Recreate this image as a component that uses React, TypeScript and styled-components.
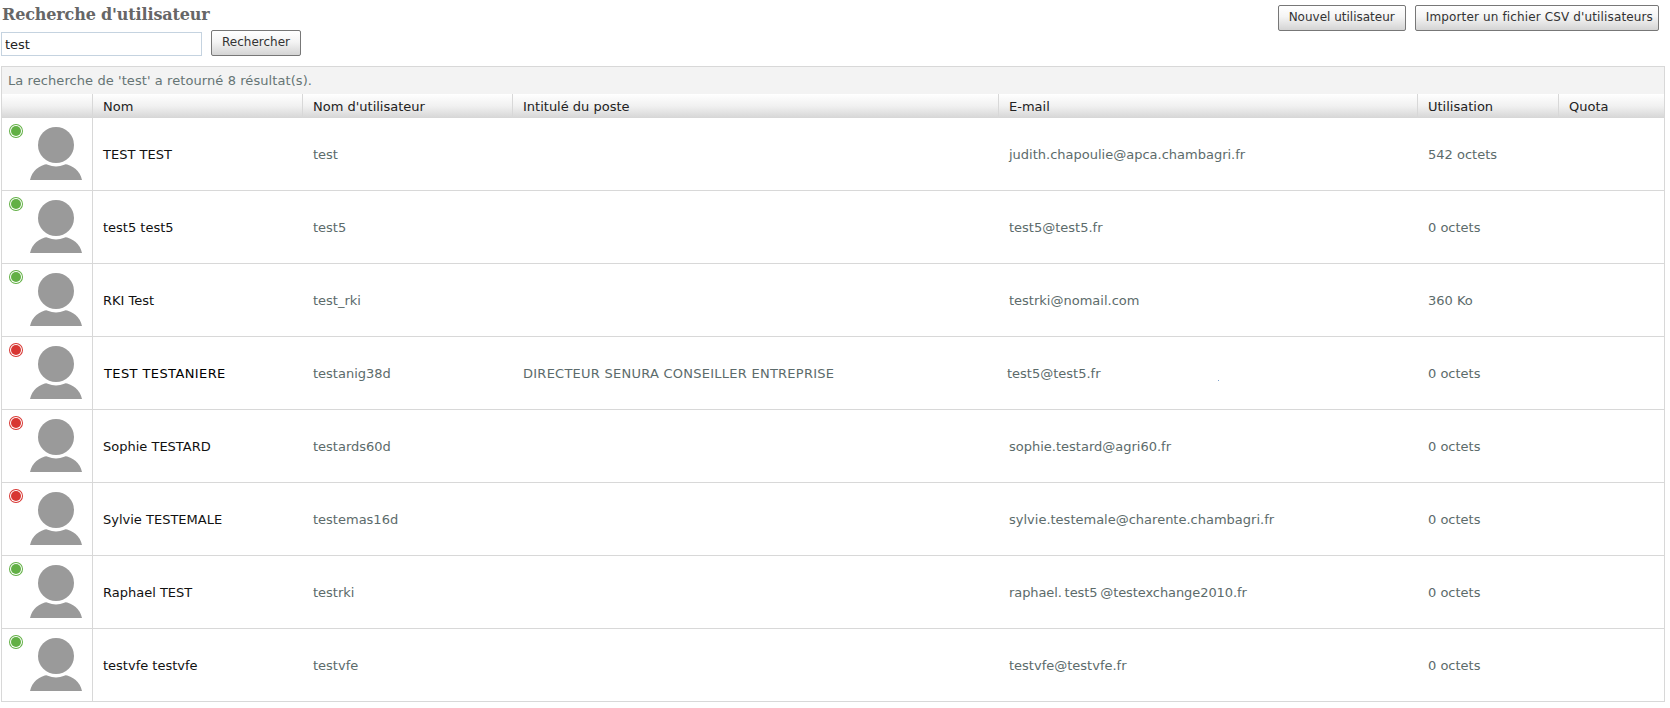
import styled, { createGlobalStyle } from "styled-components";

const GlobalStyle = createGlobalStyle`
    html, body {
        margin: 0;
        padding: 0;
        background: #fff;
    }
    body {
        font-family: "DejaVu Sans", Verdana, sans-serif;
        font-size: 13px;
        color: #5c6b6b;
    }
`;

const Page = styled.div`
    width: 1670px;
    height: 708px;
    overflow: hidden;
    padding: 5px 5px 0 1px;
    box-sizing: border-box;
`;

const TopBar = styled.div`
    display: flex;
    justify-content: space-between;
    align-items: flex-start;
    height: 61px;
`;

const SearchBox = styled.div`
    display: flex;
    flex-direction: column;
`;

const Title = styled.h1`
    margin: 0 0 5px 1px;
    font-family: "DejaVu Serif", Georgia, serif;
    font-size: 16px;
    line-height: 20px;
    letter-spacing: -0.15px;
    font-weight: bold;
    color: #666;
`;

const SearchRow = styled.form`
    display: flex;
    align-items: flex-end;
    gap: 9px;
`;

const SearchInput = styled.input`
    width: 201px;
    height: 24px;
    box-sizing: border-box;
    padding: 0 3px;
    border: 1px solid #c5d3e0;
    font-family: inherit;
    font-size: 13px;
    color: #222;
    outline: none;
`;

const Button = styled.button<{ $spaced?: boolean }>`
    height: 26px;
    padding: 0 ${(p) => (p.$spaced ? "5px" : "10px")} 2px 10px;
    box-sizing: border-box;
    border: 1px solid #777;
    border-radius: 2px;
    background: linear-gradient(#ffffff, #f4f4f4 45%, #d4d4d4);
    font-family: inherit;
    font-size: 12px;
    letter-spacing: ${(p) => (p.$spaced ? "0.14px" : "0")};
    color: #333;
`;

const Actions = styled.div`
    display: flex;
    gap: 9px;
    padding-right: 6px;
`;

const Summary = styled.div`
    height: 27px;
    line-height: 27px;
    padding-left: 6px;
    background: #f3f3f3;
    border: 1px solid #d8d8d8;
    border-width: 1px 1px 0 1px;
    color: #667575;
    font-size: 13px;
    letter-spacing: 0.08px;
`;

const Table = styled.table`
    width: 1664px;
    table-layout: fixed;
    border-collapse: separate;
    border-spacing: 0;
    border-left: 1px solid #d8d8d8;
    border-right: 1px solid #d8d8d8;
    box-sizing: border-box;
`;

const HeadCell = styled.th`
    height: 24px;
    padding: 1px 0 0 10px;
    box-sizing: border-box;
    text-align: left;
    font-weight: normal;
    font-size: 13px;
    color: #222;
    background: linear-gradient(#ffffff, #f1f1f1 50%, #d6d6d6);
    border-right: 1px solid #d8d8d8;
    &:last-child {
        border-right: none;
    }
`;

const Cell = styled.td<{ $dark?: boolean; $tight?: boolean; $spaced?: boolean }>`
    height: 73px;
    padding: 0 0 0 ${(p) => (p.$tight ? "8px" : "10px")};
    box-sizing: border-box;
    font-size: 13px;
    letter-spacing: ${(p) => (p.$spaced ? "0.25px" : "0")};
    color: ${(p) => (p.$dark ? "#111" : "#5c6b6b")};
    border-bottom: 1px solid #d8d8d8;
    position: relative;
    white-space: nowrap;
`;

const AvatarCell = styled.td`
    height: 73px;
    padding: 0;
    box-sizing: border-box;
    border-bottom: 1px solid #d8d8d8;
    border-right: 1px solid #d8d8d8;
    position: relative;
`;

const AvatarIcon = styled.svg`
    display: block;
    width: 52px;
    height: 62px;
    margin: 0 0 10px 28px;
`;

const StatusDot = styled.span<{ $on: boolean }>`
    position: absolute;
    left: 9px;
    top: 8px;
    width: 10px;
    height: 10px;
    border-radius: 50%;
    background: ${(p) => (p.$on ? "#62b045" : "#d83733")};
    box-shadow: 0 0 0 1px #fff, 0 0 0 2px ${(p) => (p.$on ? "#62b045" : "#d83733")};
`;

const Speck = styled.span`
    position: absolute;
    left: 219px;
    top: 43px;
    width: 1px;
    height: 1px;
    background: #7fa3cc;
`;

const Wide = styled.span`
    padding-left: 1px;
    letter-spacing: 0.4px;
    color: #000;
`;

const CloseWords = styled.span`
    word-spacing: -1.3px;
    letter-spacing: -0.08px;
`;

const Avatar = () => (
    <AvatarIcon viewBox="0 0 52 62">
        <path d="M0 62 C2 53 9 47 18 46 L34 46 C43 47 50 53 52 62 Z" fill="#9a9a9a" />
        <circle cx="26" cy="27" r="21.5" fill="#fff" />
        <circle cx="26" cy="27" r="18" fill="#9a9a9a" />
    </AvatarIcon>
);

const COLUMNS = [91, 210, 210, 486, 419, 141, 105];
const HEADERS = ["", "Nom", "Nom d'utilisateur", "Intitulé du poste", "E-mail", "Utilisation", "Quota"];

const USERS = [
    { on: true, name: "TEST TEST", login: "test", job: "", mail: "judith.chapoulie@apca.chambagri.fr", used: "542 octets" },
    { on: true, name: "test5 test5", login: "test5", job: "", mail: "test5@test5.fr", used: "0 octets" },
    { on: true, name: "RKI Test", login: "test_rki", job: "", mail: "testrki@nomail.com", used: "360 Ko" },
    { on: false, name: "TEST TESTANIERE", login: "testanig38d", job: "DIRECTEUR SENURA CONSEILLER ENTREPRISE", mail: "test5@test5.fr", used: "0 octets" },
    { on: false, name: "Sophie TESTARD", login: "testards60d", job: "", mail: "sophie.testard@agri60.fr", used: "0 octets" },
    { on: false, name: "Sylvie TESTEMALE", login: "testemas16d", job: "", mail: "sylvie.testemale@charente.chambagri.fr", used: "0 octets" },
    { on: true, name: "Raphael TEST", login: "testrki", job: "", mail: "raphael. test5 @testexchange2010.fr", used: "0 octets" },
    { on: true, name: "testvfe testvfe", login: "testvfe", job: "", mail: "testvfe@testvfe.fr", used: "0 octets" },
];

const App = () => {
    return (
        <>
            <GlobalStyle />
            <Page>
                <TopBar>
                    <SearchBox>
                        <Title>Recherche d'utilisateur</Title>
                        <SearchRow>
                            <SearchInput defaultValue="test" />
                            <Button type="button">Rechercher</Button>
                        </SearchRow>
                    </SearchBox>
                    <Actions>
                        <Button type="button">Nouvel utilisateur</Button>
                        <Button type="button" $spaced>Importer un fichier CSV d'utilisateurs</Button>
                    </Actions>
                </TopBar>
                <Summary>La recherche de 'test' a retourné 8 résultat(s).</Summary>
                <Table>
                    <colgroup>
                        {COLUMNS.map((w, i) => (
                            <col key={i} width={w} />
                        ))}
                    </colgroup>
                    <thead>
                        <tr>
                            {HEADERS.map((h, i) => (
                                <HeadCell key={i}>{h}</HeadCell>
                            ))}
                        </tr>
                    </thead>
                    <tbody>
                        {USERS.map((u) => {
                            const odd = u.name === "TEST TESTANIERE";
                            return (
                                <tr key={u.login}>
                                    <AvatarCell>
                                        <StatusDot $on={u.on} />
                                        <Avatar />
                                    </AvatarCell>
                                    <Cell $dark>{odd ? <Wide>{u.name}</Wide> : u.name}</Cell>
                                    <Cell>{u.login}</Cell>
                                    <Cell $spaced>{u.job}</Cell>
                                    <Cell $tight={odd}>
                                        {u.login === "testrki" ? <CloseWords>{u.mail}</CloseWords> : u.mail}
                                        {odd && <Speck />}
                                    </Cell>
                                    <Cell>{u.used}</Cell>
                                    <Cell />
                                </tr>
                            );
                        })}
                    </tbody>
                </Table>
            </Page>
        </>
    );
};

export default App;
